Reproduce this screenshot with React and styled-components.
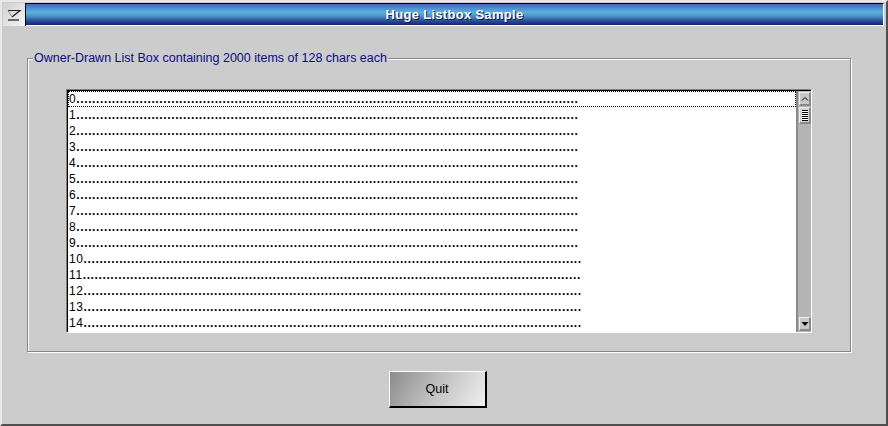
import React from "react";
import styled, { createGlobalStyle } from "styled-components";

const GlobalStyle = createGlobalStyle`
  html, body {
    margin: 0;
    padding: 0;
    background: #cccccc;
  }
  body {
    font-family: "Liberation Sans", Arial, sans-serif;
    font-size: 12px;
  }
`;

const ITEMS = Array.from({ length: 15 }, (_, i) => i);
const DOTS = ".".repeat(127);

function App() {
  return (
    <>
      <GlobalStyle />
      <Window>
        <TitleRow>
          <MenuButton>
            <svg width="16" height="14" viewBox="0 0 16 14">
              <path d="M2 2.5 H14 L6 9" fill="none" stroke="#222" strokeWidth="1.2" />
              <path d="M2 2.5 L6 9" fill="none" stroke="#888" strokeWidth="1" />
              <line x1="2" y1="12" x2="13" y2="12" stroke="#222" strokeWidth="1.3" />
            </svg>
          </MenuButton>
          <TitleBar>Huge Listbox Sample</TitleBar>
        </TitleRow>
        <Body>
          <GroupBox>
            <GroupLabel>Owner-Drawn List Box containing 2000 items of 128 chars each</GroupLabel>
            <ListBox>
              <Items>
                {ITEMS.map((i) => (
                  <Item key={i} $focused={i === 0}>
                    {i}
                    <Dots>{i > 9 ? DOTS.slice(1) : DOTS}</Dots>
                  </Item>
                ))}
              </Items>
              <ScrollBar>
                <ScrollButton>
                  <svg width="8" height="6" viewBox="0 0 8 6">
                    <path d="M1 4.5 L4 1.5 L7 4.5" fill="none" stroke="#000" strokeWidth="1" />
                  </svg>
                </ScrollButton>
                <Thumb>
                  <Grip />
                </Thumb>
                <Track />
                <ScrollButton>
                  <svg width="8" height="6" viewBox="0 0 8 6">
                    <path d="M0.5 1 H7.5 L4 5 Z" fill="#000" />
                  </svg>
                </ScrollButton>
              </ScrollBar>
            </ListBox>
          </GroupBox>
          <ButtonRow>
            <QuitButton>Quit</QuitButton>
          </ButtonRow>
        </Body>
      </Window>
    </>
  );
}

export default App;

const Window = styled.div`
  width: 888px;
  height: 426px;
  box-sizing: border-box;
  background: #cccccc;
  border-top: 2px solid #e8e8e8;
  border-left: 2px solid #e8e8e8;
  border-right: 2px solid #505050;
  border-bottom: 2px solid #505050;
  display: flex;
  flex-direction: column;
`;

const TitleRow = styled.div`
  display: flex;
  height: 23px;
  margin: 1px 2px 0 1px;
`;

const MenuButton = styled.div`
  width: 23px;
  height: 23px;
  box-sizing: border-box;
  background: linear-gradient(135deg, #d0d0d0, #f4f4f4);
  display: flex;
  align-items: center;
  justify-content: center;
  border-right: 1px solid #000;
`;

const TitleBar = styled.div`
  flex: 1;
  height: 23px;
  box-sizing: border-box;
  border-top: 1px solid #000;
  border-right: 1px solid #fff;
  border-bottom: 1px solid #fff;
  background: linear-gradient(
    to bottom,
    #4268b8 0%,
    #4f98d4 25%,
    #5ab2dc 40%,
    #4a8cc4 60%,
    #2a4e9c 80%,
    #18246e 100%
  );
  color: #fff;
  font-weight: bold;
  font-size: 13px;
  letter-spacing: 0.3px;
  text-shadow: 1px 1px 0 #0a1440;
  display: flex;
  align-items: center;
  justify-content: center;
`;

const Body = styled.div`
  flex: 1;
  display: flex;
  flex-direction: column;
  padding: 25px 35px 0 25px;
`;

const GroupBox = styled.div`
  position: relative;
  height: 294px;
  box-sizing: border-box;
  border: 1px solid #888;
  box-shadow: 1px 1px 0 #fff, inset 1px 1px 0 #fff;
  padding: 30px 38px 18px 38px;
  margin-top: 7px;
`;

const GroupLabel = styled.div`
  position: absolute;
  top: -8px;
  left: 5px;
  padding: 0 1px 0 1px;
  background: #cccccc;
  color: #0a0a88;
  font-size: 12.5px;
  line-height: 14px;
  white-space: nowrap;
`;

const ListBox = styled.div`
  height: 244px;
  box-sizing: border-box;
  display: flex;
  background: #fff;
  border-top: 1px solid #808080;
  border-left: 1px solid #808080;
  border-right: 1px solid #fff;
  border-bottom: 1px solid #fff;
  box-shadow: inset 1px 1px 0 #000;
  padding: 1px 0 0 1px;
`;

const Items = styled.div`
  flex: 1;
  overflow: hidden;
`;

const Item = styled.div`
  height: 16px;
  box-sizing: border-box;
  line-height: 15px;
  padding-left: 0;
  font-size: 12px;
  letter-spacing: 0.6px;
  color: #000;
  white-space: nowrap;
  overflow: hidden;
  border: 1px dotted ${(p) => (p.$focused ? "#000" : "transparent")};
`;

const Dots = styled.span`
  font-weight: bold;
  letter-spacing: 0.62px;
`;

const ScrollBar = styled.div`
  width: 15px;
  display: flex;
  flex-direction: column;
  background: #b4b4b4;
  border-left: 2px solid #8a8a8a;
  box-sizing: border-box;
  padding: 1px 0 1px 1px;
`;

const ScrollButton = styled.div`
  height: 14px;
  box-sizing: border-box;
  background: #c8c8c8;
  border-top: 1px solid #f0f0f0;
  border-left: 1px solid #f0f0f0;
  border-right: 2px solid #8a8a8a;
  border-bottom: 2px solid #8a8a8a;
  display: flex;
  align-items: center;
  justify-content: center;
`;

const Thumb = styled.div`
  height: 17px;
  margin-top: 1px;
  box-sizing: border-box;
  background: #d4d4d4;
  border-top: 1px solid #f0f0f0;
  border-left: 1px solid #f0f0f0;
  border-right: 2px solid #8a8a8a;
  border-bottom: 2px solid #8a8a8a;
  display: flex;
  align-items: center;
  justify-content: center;
`;

const Grip = styled.div`
  width: 6px;
  height: 11px;
  background: repeating-linear-gradient(
    to bottom,
    #000 0px,
    #000 1px,
    #fff 1px,
    #fff 2px
  );
`;

const Track = styled.div`
  flex: 1;
`;

const ButtonRow = styled.div`
  display: flex;
  justify-content: center;
  padding: 19px 4px 0 0;
  width: 825px;
  box-sizing: border-box;
`;

const QuitButton = styled.button`
  width: 98px;
  height: 37px;
  box-sizing: border-box;
  font-family: "Liberation Sans", Arial, sans-serif;
  font-size: 12.5px;
  color: #000;
  background: linear-gradient(120deg, #8c8c8c 0%, #bdbdbd 45%, #f0f0f0 100%);
  border-top: 1px solid #fff;
  border-left: 1px solid #fff;
  border-right: 2px solid #000;
  border-bottom: 2px solid #000;
  padding: 0;
`;
